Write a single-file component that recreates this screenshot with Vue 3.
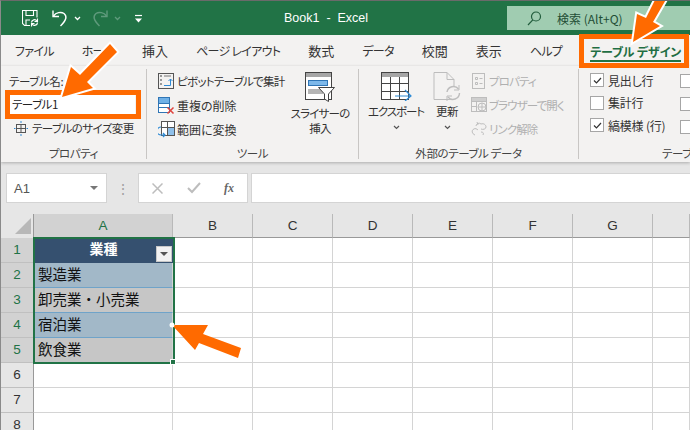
<script setup>
const tabs = [
  { t: 'ファイル', kana: true }, { t: 'ホーム', kana: true }, { t: '挿入', kana: false },
  { t: 'ページ レイアウト', kana: true }, { t: '数式', kana: false }, { t: 'データ', kana: true },
  { t: '校閲', kana: false }, { t: '表示', kana: false }, { t: 'ヘルプ', kana: true }
]
const cols = [
  { name: 'A', w: 139 }, { name: 'B', w: 80 }, { name: 'C', w: 80 }, { name: 'D', w: 80 },
  { name: 'E', w: 80 }, { name: 'F', w: 80 }, { name: 'G', w: 80 }, { name: '', w: 37 }
]
const rows = [
  { n: 1, text: '業種' }, { n: 2, text: '製造業' }, { n: 3, text: '卸売業・小売業' },
  { n: 4, text: '宿泊業' }, { n: 5, text: '飲食業' }, { n: 6, text: '' }, { n: 7, text: '' }, { n: 8, text: '' }
]
const checks = [
  { label: '見出し行', on: true }, { label: '集計行', on: false }, { label: '縞模様 (行)', on: true }
]
</script>

<template>
  <div class="app">
    <header class="title">
      <div class="qat">
        <svg class="save" width="17" height="17" viewBox="0 0 17 17" fill="none" stroke="#fff" stroke-width="1.100">
          <path d="M8 15.500H2.500L.5 13.500V.5h14.500v7" />
          <path d="M4 .5v5h7.500V.5M4 15.500V10h4" />
          <path d="M9.500 12.500a3 3 0 0 1 5.500-1.500M15.500 12.500a3 3 0 0 1-5.500 1.500" stroke-width="1.300" />
          <path d="M15.500 8.500V11.500H12.500M9.500 16.500V13.500H12.500" />
        </svg>
        <svg class="undo" width="16" height="18" viewBox="0 0 16 18" fill="none" stroke="#fff" stroke-width="1.400">
          <path d="M1 1.500v6h6" />
          <path d="M1.500 7C4 3.500 9 2.500 12 4.500c3 2.500 3 6-3.500 12.500" />
        </svg>
        <svg class="chev-w" width="7" height="5" viewBox="0 0 7 5" fill="none" stroke="#fff" stroke-width="1.300"><path d="M1 1l2.500 2.500L6 1" /></svg>
        <svg class="redo" width="16" height="18" viewBox="0 0 16 18" fill="none" stroke="#5f9a7c" stroke-width="1.400">
          <path d="M15 1.500v6H9" />
          <path d="M14.500 7C12 3.500 7 2.500 4 4.500c-3 2.500-3 6 3.500 12.500" />
        </svg>
        <svg class="chev-w" width="7" height="5" viewBox="0 0 7 5" fill="none" stroke="#5f9a7c" stroke-width="1.300"><path d="M1 1l2.500 2.500L6 1" /></svg>
        <svg class="more" width="7" height="9" viewBox="0 0 7 9"><path d="M0 1.500h7" stroke="#fff" stroke-width="1.200" /><path d="M0 4.500h7L3.500 8.500z" fill="#fff" /></svg>
      </div>
      <div class="doc">Book1&nbsp; -&nbsp; Excel</div>
      <div class="search">
        <svg width="15" height="15" viewBox="0 0 15 15" fill="none" stroke="#215c3c" stroke-width="1.200">
          <circle cx="9" cy="5.500" r="4.500" /><path d="M5.800 8.800 1 14" />
        </svg>
        <span>検索 (Alt+Q)</span>
      </div>
    </header>

    <nav class="tabs">
      <span v-for="t in tabs" :key="t.t" :class="{ kana: t.kana }">{{ t.t }}</span>
      <span class="active">テーブル デザイン</span>
    </nav>

    <section class="ribbon">
      <div class="group g1">
        <div class="gbody col1">
          <div class="lbl">テーブル名:</div>
          <div class="namebox">テーブル1</div>
          <div class="item resize">
            <svg width="14" height="15" viewBox="0 0 14 15" fill="none" stroke="#555"><rect x="2.500" y="3.500" width="9" height="8" /><path d="M2.500 7.500h9M7 3.500v8" /><path d="M7 0v2M7 13v2M0 7.500h1.500M12.500 7.500h1.500" stroke="#2e8bd6" /></svg>
            テーブルのサイズ変更
          </div>
        </div>
        <div class="gname">プロパティ</div>
      </div>

      <div class="group g2">
        <div class="gbody tools">
          <div class="stack">
            <div class="item">
              <svg width="16" height="16" viewBox="0 0 16 16" fill="none" stroke="#555"><rect x="0.500" y="0.500" width="15" height="15" /><rect x="2" y="2" width="2" height="2" fill="#999" stroke="none" /><rect x="2" y="6" width="2" height="2" fill="#999" stroke="none" /><rect x="2" y="10" width="2" height="2" fill="#999" stroke="none" /><path d="M6 3h7" stroke="#777" /><path d="M6 12.500h6.500V6M10.500 8l2-2 2 2" stroke="#2e8bd6" /></svg>
              ピボットテーブルで集計
            </div>
            <div class="item wide">
              <svg width="17" height="17" viewBox="0 0 17 17" fill="none"><rect x="0.500" y="0.500" width="11" height="15" fill="#fff" stroke="#2f75b5" /><rect x="1" y="1" width="10" height="5" fill="#6fb0e6" /><path d="M0.500 6.500h11M0.500 10.500h11" stroke="#2f75b5" /><path d="M9.500 10.500l6 6M15.500 10.500l-6 6" stroke="#e0443e" stroke-width="1.500" /></svg>
              重複の削除
            </div>
            <div class="item wide">
              <svg width="17" height="17" viewBox="0 0 17 17" fill="none"><rect x="3.500" y="0.500" width="13" height="14" fill="#fff" stroke="#555" /><rect x="9" y="7" width="7" height="7" fill="#8fc0ea" /><path d="M3.500 6.500h13M9.500 .5v14" stroke="#555" /><path d="M3 6a4 4 0 0 0 0 8h4M5 12l2 2-2 2" stroke="#2e8bd6" stroke-width="1.200" /></svg>
              範囲に変換
            </div>
          </div>
          <div class="big slicer">
            <svg width="30" height="30" viewBox="0 0 30 30" fill="none">
              <rect x="0.500" y="0.500" width="26" height="27" fill="#fff" stroke="#444" />
              <rect x="1" y="1" width="25" height="4" fill="#a6a6a6" />
              <rect x="3.500" y="8.500" width="19" height="5" fill="#7db8ea" stroke="#2f75b5" />
              <rect x="3" y="17" width="15" height="5" fill="#b5b5b5" />
              <path d="M13.500 15.500h16l-6 6.500v7.500l-4-2.500V22z" fill="#fff" stroke="#444" />
            </svg>
            <div>スライサーの<br />挿入</div>
          </div>
        </div>
        <div class="gname">ツール</div>
      </div>

      <div class="group g3">
        <div class="gbody ext">
          <div class="big export">
            <svg width="31" height="29" viewBox="0 0 31 29" fill="none">
              <rect x="0.500" y="0.500" width="27" height="27" fill="#fff" stroke="#444" />
              <rect x="1" y="1" width="26" height="4" fill="#a6a6a6" />
              <path d="M0.500 11.500h27M0.500 19.500h27M9.500 5v22M18.500 5v22" stroke="#444" />
              <path d="M14 24h16M24 18l6 6-6 5" stroke="#2e8bd6" stroke-width="1.200" />
            </svg>
            <div>エクスポート</div>
            <svg class="chev-b" width="7" height="5" viewBox="0 0 7 5" fill="none" stroke="#555" stroke-width="1.200"><path d="M1 1l2.500 2.500L6 1" /></svg>
          </div>
          <div class="big refresh">
            <svg width="28" height="29" viewBox="0 0 28 29" fill="none" stroke="#bdbdbd">
              <path d="M1 .5h13l7 7v20H1z" />
              <path d="M14 .5v7h7" />
              <circle cx="20" cy="21" r="7" stroke="none" fill="#f3f2f1" />
              <path d="M14 20a6.500 6.500 0 0 1 11.500-3M26.500 21a6.500 6.500 0 0 1-11.500 4" stroke-width="1.400" />
              <path d="M26 13v5h-5M14 29v-5h5" />
            </svg>
            <div>更新</div>
            <svg class="chev-b" width="7" height="5" viewBox="0 0 7 5" fill="none" stroke="#555" stroke-width="1.200"><path d="M1 1l2.500 2.500L6 1" /></svg>
          </div>
          <div class="stack off">
            <div class="item"><svg width="16" height="16" viewBox="0 0 16 16" fill="none" stroke="#bdbdbd"><rect x="1.500" y="0.500" width="12" height="15" /><path d="M4.500 4.500h2v2h-2zM4.500 9.500h2v2h-2zM8.500 5.500h3M8.500 10.500h3" /></svg>プロパティ</div>
            <div class="item"><svg width="16" height="16" viewBox="0 0 16 16" fill="none" stroke="#bdbdbd"><rect x="0.500" y="0.500" width="15" height="14" /><rect x="1" y="1" width="14" height="3" fill="#cfcfcf" stroke="none" /><path d="M0.500 4.500h15M5.500 4.500v10M.5 9.500h5" /><circle cx="11" cy="10" r="4" fill="#f3f2f1" /><path d="M7 10h8M11 6v8" /></svg>ブラウザーで開く</div>
            <div class="item"><svg width="16" height="16" viewBox="0 0 16 16" fill="none" stroke="#bdbdbd"><path d="M5 5a3 3 0 0 1 5-2c3-1 5 1 5 3s-3 3-5 2M4 14c-3-1-4-5-1-6 1-1 3 0 4 1M10 11c2 0 3 1 2 3M6 1l1 3" /></svg>リンク解除</div>
          </div>
        </div>
        <div class="gname">外部のテーブル データ</div>
      </div>

      <div class="group g4">
        <div class="gbody checks">
          <div class="stack">
            <div class="check" v-for="c in checks" :key="c.label">
              <span class="box">
                <svg v-if="c.on" width="11" height="11" viewBox="0 0 11 11" fill="none" stroke="#333" stroke-width="1.200"><path d="M2 5.500 4.500 8 9 3" /></svg>
              </span>
              {{ c.label }}
            </div>
          </div>
          <div class="stack boxes">
            <span class="box" /><span class="box" /><span class="box" />
          </div>
        </div>
        <div class="gname g4name">テーブ</div>
      </div>
    </section>

    <section class="formula">
      <div class="cellname">
        <span>A1</span>
        <i class="tri" />
      </div>
      <div class="dots">⋮</div>
      <div class="fbtns">
        <svg width="11" height="11" viewBox="0 0 11 11" stroke="#bdbdbd" stroke-width="1.500"><path d="M.5.5l10 10M10.500.5l-10 10" /></svg>
        <svg width="14" height="12" viewBox="0 0 14 12" fill="none" stroke="#bdbdbd" stroke-width="2"><path d="M1 6l4 4 8-9" /></svg>
        <em>fx</em>
      </div>
      <div class="finput" />
    </section>

    <section class="sheet">
      <div class="hrow">
        <div class="corner"><i /></div>
        <div v-for="(c, i) in cols" :key="i" class="chead" :class="{ sel: i === 0 }" :style="{ width: c.w + 'px' }">{{ c.name }}</div>
      </div>
      <div class="row" v-for="r in rows" :key="r.n">
        <div class="rhead" :class="{ sel: r.n <= 5 }">{{ r.n }}</div>
        <div class="cell cellA" :class="'r' + r.n">
          <span>{{ r.text }}</span>
          <span v-if="r.n === 1" class="filter"><i class="tri small" /></span>
        </div>
        <div v-for="(c, i) in cols.slice(1)" :key="i" class="cell" :style="{ width: c.w + 'px' }" />
      </div>
      <div class="selection"><i /></div>
    </section>

    <div class="overlay box-name" />
    <div class="overlay box-tab" />
    <svg class="overlay arrows" width="690" height="430" viewBox="0 0 690 430">
      <g fill="#ff6a00" stroke="#fff" stroke-width="4" paint-order="stroke" stroke-linejoin="miter">
        <path d="M62 97 71 67 80 75 110 44 117 52 87 82 93 88z" />
        <path d="M633 42 637 14 646 18 657 -4 668 -4 653 22 660 26z" />
      </g>
      <path d="M172 325 208 325 203 334 241 348 238 358 199 343 195 350z" fill="#ff6a00" />
      <circle cx="172" cy="325" r="2.500" fill="#fff" />
    </svg>
  </div>
</template>

<style>
html, body { margin: 0; background: #fff; }
</style>

<style scoped>
.app {
  position: relative;
  width: 690px;
  height: 430px;
  overflow: hidden;
  box-sizing: border-box;
  border-top: 1px solid #6a6a6a;
  border-left: 1px solid #8a8a8a;
  background: #e6e6e6;
  font-family: "Noto Sans CJK JP", "Noto Sans", sans-serif;
  font-size: 12px;
  color: #333;
  font-feature-settings: "palt";
}
.title {
  height: 34px;
  background: #217346;
  display: flex;
  align-items: center;
  color: #fff;
}
.qat { display: flex; align-items: center; width: 283px; padding-left: 21px; box-sizing: border-box; }
.undo { margin-left: 13px; }
.chev-w { margin-left: 6px; margin-top: 1px; }
.redo { margin-left: 11px; }
.more { margin-left: 14px; }
.doc { width: 223px; font-family: "Liberation Sans", sans-serif; font-size: 12.500px; }
.search {
  flex: 1;
  height: 24px;
  background: #a0ccb1;
  display: flex;
  align-items: center;
  color: #1f4e35;
  padding-left: 20px;
  box-sizing: border-box;
  gap: 15px;
  font-size: 12px;
}
.tabs {
  height: 31px;
  background: #f3f2f1;
  display: flex;
  align-items: center;
  gap: 28px;
  padding-left: 14px;
  font-size: 13px;
  white-space: nowrap;
}
.tabs .kana { font-size: 12px; letter-spacing: -.7px; }
.tabs .active {
  color: #1f6e43;
  font-weight: 700;
  font-size: 12px;
  letter-spacing: -.15px;
  border-bottom: 2px solid #217346;
  line-height: 17px;
  margin-top: 4px;
  white-space: nowrap;
}
.ribbon {
  height: 96px;
  background: #f3f2f1;
  display: flex;
  box-shadow: 0 1px 3px rgba(0,0,0,.25);
  position: relative;
}
.group { display: flex; flex-direction: column; border-right: 1px solid #c8c6c4; height: 90px; margin-top: 3px; box-sizing: border-box; }
.gbody { flex: 1; min-height: 0; }
.gname { text-align: center; font-size: 11.500px; line-height: 16px; color: #444; height: 16px; margin-bottom: -2px; letter-spacing: -.4px; white-space: nowrap; }
.g1 { width: 146px; }
.g2 { width: 212px; }
.g3 { width: 220px; }
.g4 { width: 111px; border-right: 0; }
.g4name { text-align: left; padding-left: 83px; }
.col1 { padding-left: 8px; }
.lbl { height: 18px; line-height: 18px; margin-top: 3px; font-size: 11.500px; letter-spacing: -.4px; }
.namebox { height: 19px; line-height: 19px; padding-left: 2px; margin-left: 1px; background: #fff; color: #222; width: 125px; margin-top: 5px; font-size: 11.500px; letter-spacing: -.5px; box-sizing: border-box; }
.item { display: flex; align-items: center; gap: 3px; height: 24px; white-space: nowrap; font-size: 11.500px; letter-spacing: -.7px; }
.item.wide { font-size: 12px; letter-spacing: 0; gap: 2px; }
.resize { padding-left: 5px; margin-top: 2px; gap: 4px; letter-spacing: -.55px; }
.tools { display: flex; padding-left: 11px; }
.stack { display: flex; flex-direction: column; }
.big { display: flex; flex-direction: column; align-items: center; text-align: center; line-height: 15px; font-size: 11.500px; letter-spacing: -.55px; white-space: nowrap; }
.slicer { width: 56px; padding-top: 3px; margin-left: -1px; letter-spacing: -.8px; }
.slicer svg { margin-bottom: 4px; }
.tools .stack { width: 135px; }
.ext { display: flex; padding-left: 9px; }
.export { width: 56px; padding-top: 3px; letter-spacing: -1.100px; }
.export svg { margin-bottom: 3px; }
.refresh { width: 42px; margin-left: 2px; padding-top: 3px; }
.refresh svg { margin-bottom: 3px; }
.chev-b { margin-top: 6px; }
.off { color: #b0b0b0; margin-left: 3px; }
.off .item { gap: 2px; letter-spacing: -.9px; }
.checks { display: flex; padding-left: 11px; }
.check { display: flex; align-items: center; gap: 4px; height: 22.500px; white-space: nowrap; font-size: 12px; letter-spacing: -.2px; }
.box { width: 12px; height: 12px; border: 1px solid #a6a6a6; background: #fff; display: inline-flex; align-items: center; justify-content: center; flex: none; }
.boxes { margin-left: 15px; padding-top: 5px; gap: 9px; }
.formula {
  height: 52px;
  display: flex;
  align-items: center;
  background: #e6e6e6;
  padding-left: 5px;
  box-sizing: border-box;
}
.cellname { width: 101px; height: 30px; background: #fff; border: 1px solid #d4d4d4; display: flex; align-items: center; justify-content: space-between; padding: 0 8px 0 7px; box-sizing: border-box; color: #555; font-size: 13px; font-family: "Liberation Sans", sans-serif; }
.tri { width: 0; height: 0; border: 4px solid transparent; border-top: 4px solid #777; border-bottom: 0; }
.dots { width: 31px; text-align: center; color: #a0a0a0; font-size: 14px; }
.fbtns { width: 110px; height: 30px; background: #fff; border: 1px solid #d4d4d4; box-sizing: border-box; display: flex; align-items: center; justify-content: space-between; padding: 0 13px; }
.fbtns em { font-family: "Liberation Serif", serif; font-weight: 700; color: #666; font-size: 12px; }
.finput { flex: 1; height: 30px; background: #fff; border: 1px solid #d4d4d4; box-sizing: border-box; margin-left: 3px; border-right: 0; }
.sheet { position: relative; background: #fff; }
.hrow { display: flex; height: 24px; background: #e6e6e6; }
.corner { width: 33px; height: 24px; position: relative; flex: none; background: #e6e6e6; border-right: 1px solid #999; box-sizing: border-box; }
.corner i { position: absolute; right: 2px; bottom: 4px; border-left: 16px solid transparent; border-bottom: 16px solid #b8b8b8; }
.chead { flex: none; box-sizing: border-box; border-right: 1px solid #b9b9b9; border-bottom: 1px solid #999; text-align: center; line-height: 24px; font-family: "Liberation Sans", sans-serif; font-size: 13.500px; color: #333; }
.chead.sel { background: #d2d2d2; color: #217346; }
.row { display: flex; height: 25px; }
.rhead { width: 33px; flex: none; box-sizing: border-box; background: #e6e6e6; border-right: 1px solid #999; border-bottom: 1px solid #c0c0c0; text-align: center; line-height: 24px; font-family: "Liberation Sans", sans-serif; font-size: 13.500px; color: #333; }
.rhead.sel { background: #d2d2d2; color: #217346; }
.cell { flex: none; box-sizing: border-box; border-right: 1px solid #d4d4d4; border-bottom: 1px solid #d4d4d4; }
.cellA { width: 139px; padding-left: 4px; line-height: 21px; font-size: 14.500px; color: #111; position: relative; white-space: nowrap; font-feature-settings: normal; }
.r1 { background: #35506f; color: #fff; font-weight: 700; font-size: 14px; text-align: center; padding-left: 0; line-height: 20px; border: 0; }
.r2, .r4 { background: #a2b8c8; border-bottom: 1px solid #6fa3c9; }
.r3, .r5 { background: #c6c6c6; border-bottom: 1px solid #6fa3c9; }
.r5 { border-bottom: 0; }
.filter { position: absolute; right: 1px; bottom: 1px; width: 16px; height: 16px; background: #f2f2f2; border: 1px solid #c8c8c8; box-sizing: border-box; display: flex; align-items: center; justify-content: center; }
.tri.small { border-top-color: #555; }
.selection { position: absolute; left: 32px; top: 23px; width: 142px; height: 127px; box-sizing: border-box; border: 2px solid #217346; pointer-events: none; }
.selection i { position: absolute; right: -3px; bottom: -3px; background: #217346; border: 1px solid #fff; box-sizing: content-box; width: 4px; height: 4px; }
.overlay { position: absolute; pointer-events: none; box-sizing: border-box; }
.box-name { left: 4px; top: 89px; width: 136px; height: 29px; border: 5px solid #ff6a00; }
.box-tab { left: 578px; top: 33px; width: 110px; height: 34px; border: 5px solid #ff6a00; }
.arrows { left: -1px; top: -1px; }
</style>
